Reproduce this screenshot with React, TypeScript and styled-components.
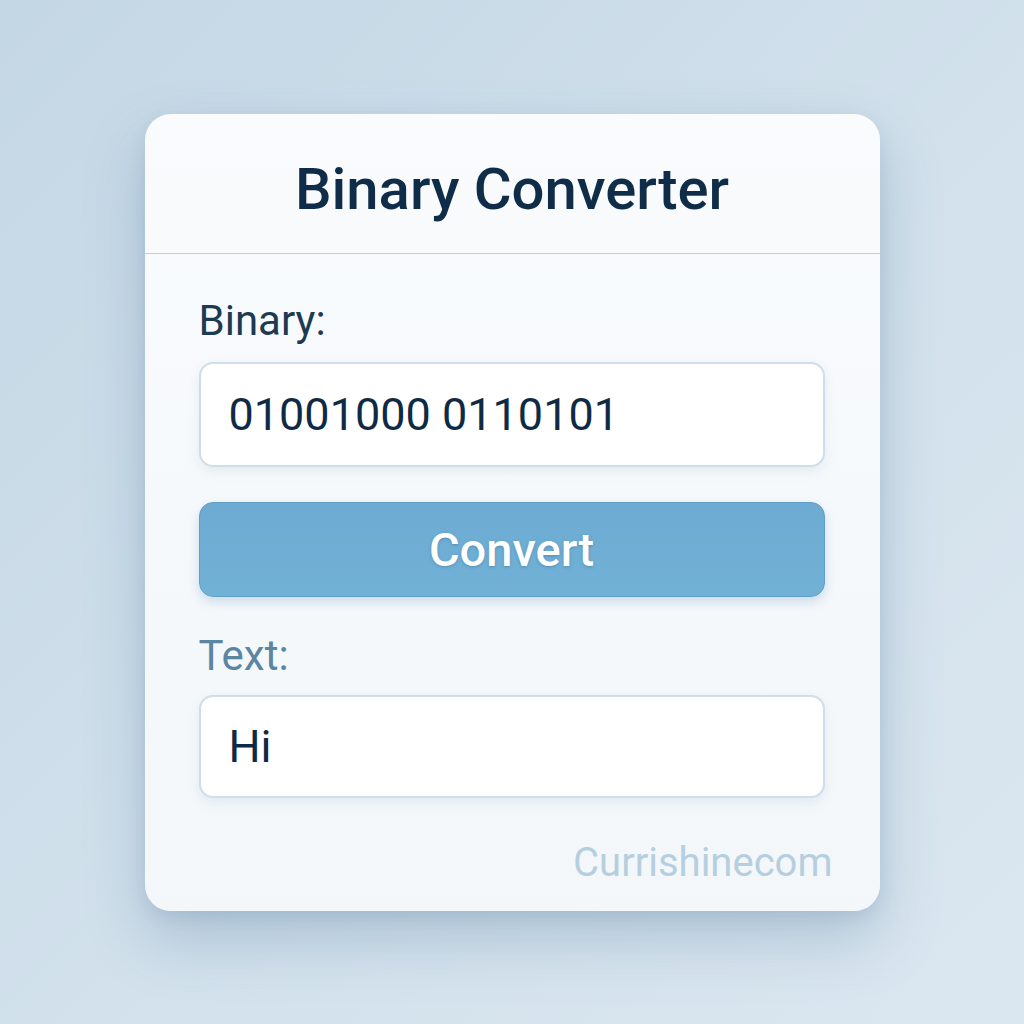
import React from "react";
import styled, { createGlobalStyle } from "styled-components";

const GlobalStyle = createGlobalStyle`
  html, body {
    margin: 0;
    padding: 0;
  }
  body {
    font-family: Roboto, "Liberation Sans", sans-serif;
    background: linear-gradient(135deg, #c4d7e5 0%, #d2e1ec 55%, #dbe7f0 100%);
  }
`;

const Page = styled.div`
  width: 1024px;
  height: 1024px;
  display: flex;
  align-items: center;
  justify-content: center;
`;

const Card = styled.div`
  width: 735px;
  box-sizing: border-box;
  background: linear-gradient(180deg, #f9fbfd 0%, #f3f7fa 100%);
  border-radius: 26px;
  box-shadow: 0 28px 60px rgba(70, 110, 150, 0.28), 0 6px 16px rgba(70, 110, 150, 0.12);
  display: flex;
  flex-direction: column;
`;

const Header = styled.div`
  height: 140px;
  box-sizing: border-box;
  padding-top: 12px;
  border-bottom: 1px solid #b9d1e3;
  display: flex;
  align-items: center;
  justify-content: center;
`;

const Title = styled.h1`
  margin: 0;
  font-size: 58px;
  line-height: 1;
  font-weight: 500;
  color: #0f2d48;
`;

const Body = styled.div`
  padding: 46px 55px 28px 54px;
  display: flex;
  flex-direction: column;
`;

const Label = styled.label<{ $muted?: boolean }>`
  display: block;
  font-size: 42px;
  line-height: 1;
  color: ${(p) => (p.$muted ? "#5a86a2" : "#1c3a52")};
  margin-top: ${(p) => (p.$muted ? "38px" : "0")};
`;

const Field = styled.input<{ $tight?: boolean }>`
  margin-top: ${(p) => (p.$tight ? "18px" : "20px")};
  height: ${(p) => (p.$tight ? "103px" : "105px")};
  box-sizing: border-box;
  width: 100%;
  padding: 0 28px;
  border: 2px solid #d0dee9;
  border-radius: 14px;
  background: #ffffff;
  box-shadow: 0 5px 12px rgba(80, 120, 160, 0.1);
  font-family: Roboto, "Liberation Sans", sans-serif;
  font-size: 45px;
  color: #0e2a44;
  outline: none;
`;

const ConvertButton = styled.button`
  margin-top: 35px;
  height: 95px;
  width: 100%;
  border: 1px solid #5e9ec7;
  border-radius: 14px;
  background: linear-gradient(180deg, #6dabd2 0%, #72b1d6 100%);
  box-shadow: 0 5px 12px rgba(60, 120, 170, 0.22);
  font-family: Roboto, "Liberation Sans", sans-serif;
  font-size: 47px;
  font-weight: 500;
  color: #ffffff;
  text-shadow: 0 1px 3px rgba(30, 80, 120, 0.35);
  cursor: pointer;
`;

const Watermark = styled.div`
  margin-top: 45px;
  margin-right: -8px;
  text-align: right;
  font-size: 40px;
  line-height: 1;
  color: #b6cfe0;
`;

export default function App() {
  return (
    <>
      <GlobalStyle />
      <Page>
        <Card>
          <Header>
            <Title>Binary Converter</Title>
          </Header>
          <Body>
            <Label>Binary:</Label>
            <Field value="01001000 0110101" readOnly />
            <ConvertButton>Convert</ConvertButton>
            <Label $muted>Text:</Label>
            <Field $tight value="Hi" readOnly />
            <Watermark>Currishinecom</Watermark>
          </Body>
        </Card>
      </Page>
    </>
  );
}
